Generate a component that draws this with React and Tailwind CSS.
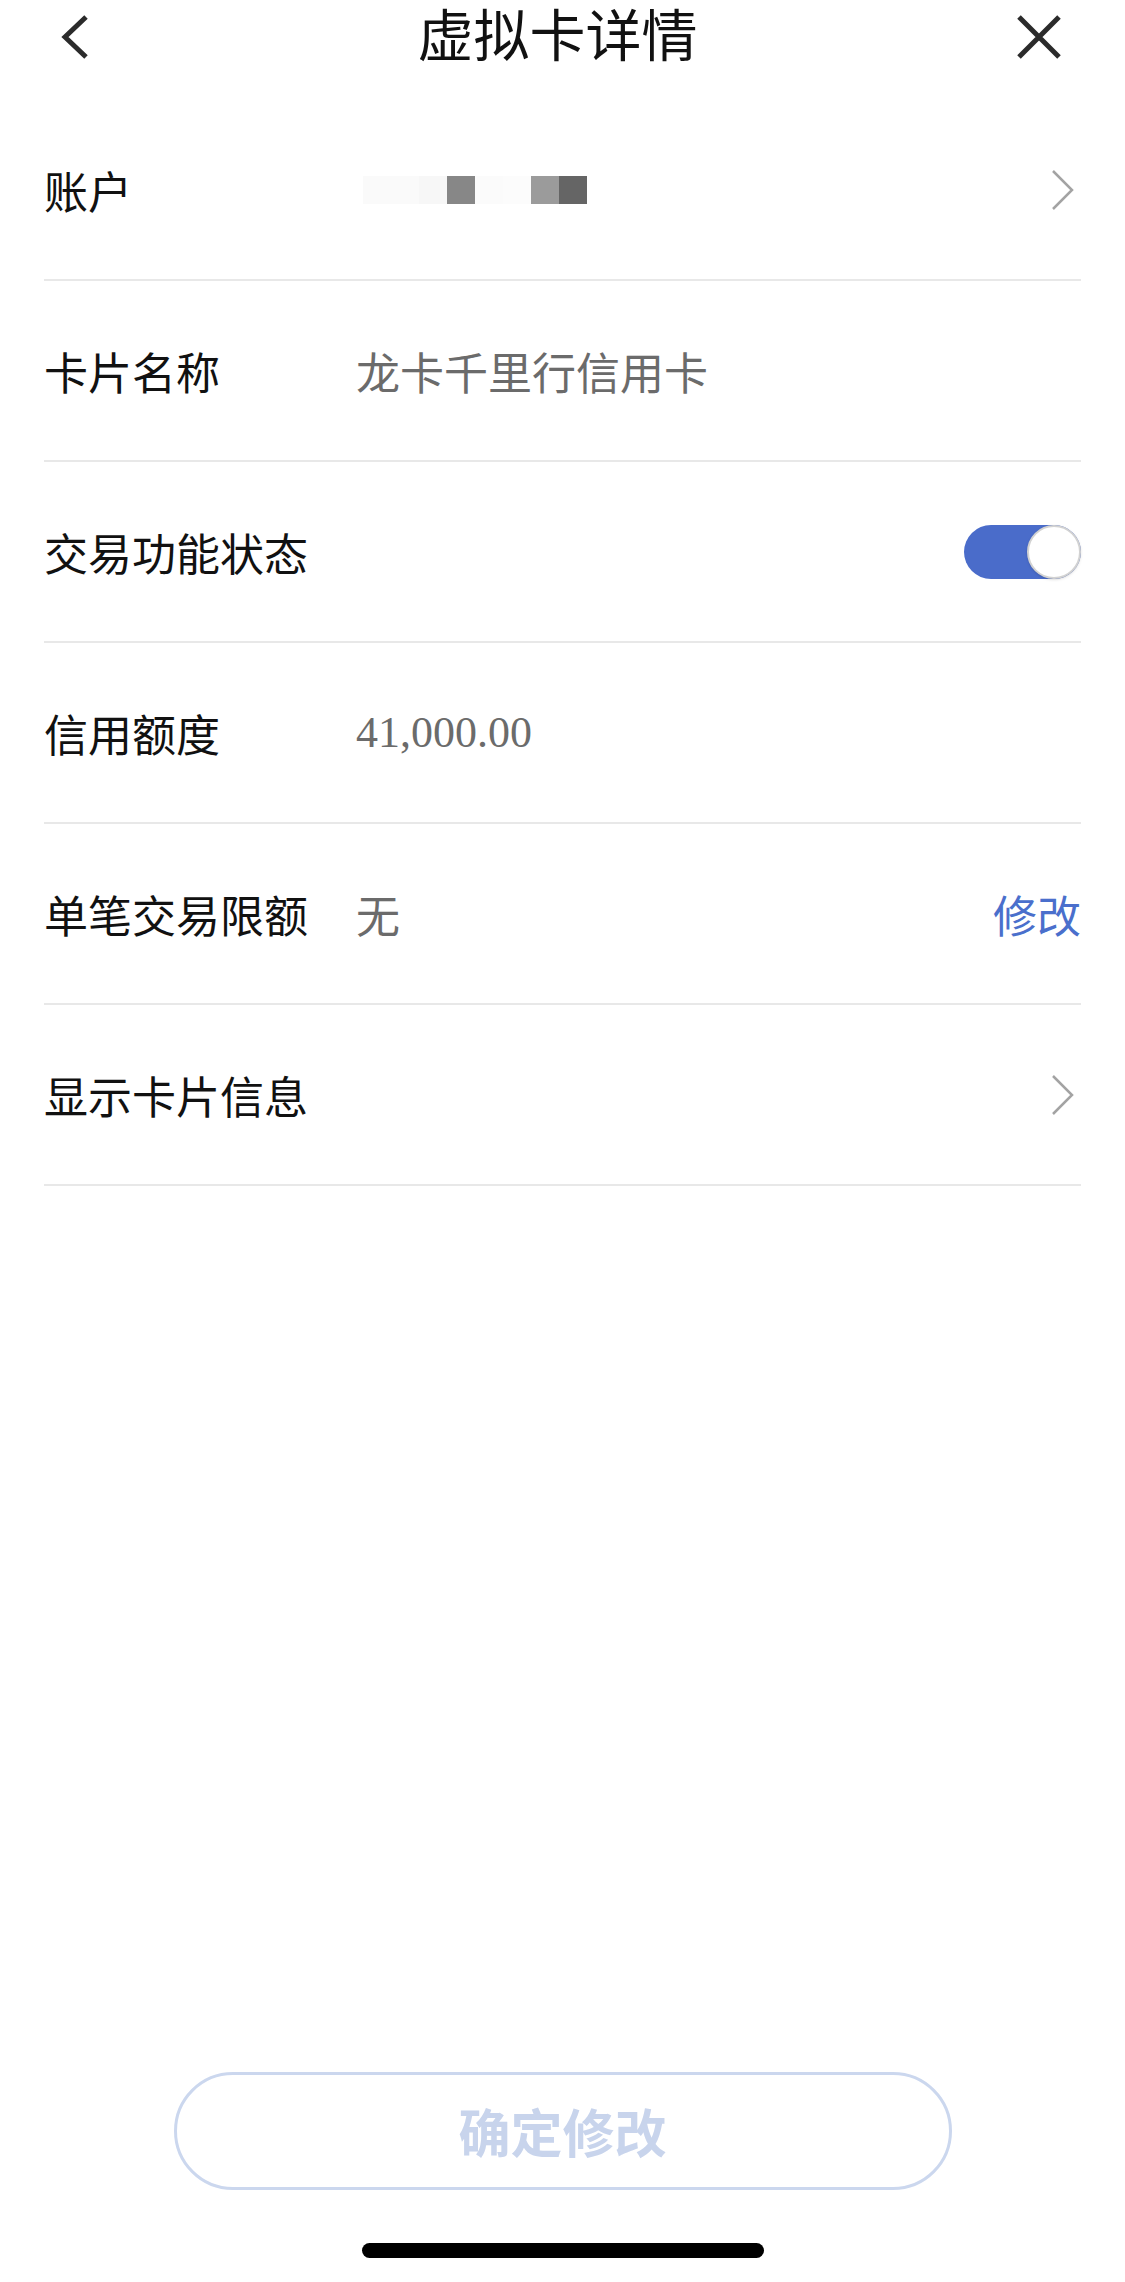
import { useState } from 'react'

const FONT = { fontFamily: '"Noto Sans CJK SC", "Noto Sans", sans-serif' }

// 马赛克遮挡的账户号
const MOSAIC = ['#fafafa', '#fafafa', '#f7f7f7', '#878787', '#fbfbfb', '#fcfcfc', '#9b9b9b', '#656565']

function Chevron() {
  return (
    <svg width="26" height="44" viewBox="0 0 26 44" className="mr-[6px]">
      <path d="M4 3 L23 22 L4 41" fill="none" stroke="#a3a3a3" strokeWidth="2.5" />
    </svg>
  )
}

function Row({ label, children, right }) {
  return (
    <div className="flex items-center h-[181px] border-b-2 border-[#e8e8e8]">
      <span className="w-[312px] shrink-0 text-[44px] leading-normal text-[#111]">{label}</span>
      <div className="flex-1 flex items-center text-[44px] leading-normal text-[#6b6b6b]">{children}</div>
      {right}
    </div>
  )
}

export default function App() {
  const [on, setOn] = useState(true)

  return (
    <div className="w-[1125px] h-[2282px] bg-white flex flex-col" style={FONT}>
      {/* Header */}
      <div className="h-[100px] shrink-0">
        <div className="h-[70px] grid grid-cols-[1fr_auto_1fr] items-center pl-[52px] pr-[62px]">
          <svg width="48" height="48" viewBox="0 0 48 48" className="justify-self-start">
            <path d="M34 4 L13 24 L34 44" fill="none" stroke="#2b2b2b" strokeWidth="5" />
          </svg>
          <h1 className="text-[56px] leading-[64px] pb-[10px] font-normal text-[#111]">虚拟卡详情</h1>
          <svg width="48" height="48" viewBox="0 0 48 48" className="justify-self-end">
            <path d="M4 4 L44 44 M44 4 L4 44" fill="none" stroke="#2b2b2b" strokeWidth="5" />
          </svg>
        </div>
      </div>

      {/* List */}
      <div className="mx-[44px] flex flex-col">
        <Row label="账户" right={<Chevron />}>
          <div className="ml-[7px] flex">
            {MOSAIC.map((c, i) => (
              <div key={i} className="w-[28px] h-[28px]" style={{ backgroundColor: c }} />
            ))}
          </div>
        </Row>
        <Row label="卡片名称">龙卡千里行信用卡</Row>
        <Row
          label="交易功能状态"
          right={
            <button
              onClick={() => setOn(!on)}
              className="w-[117px] h-[54px] rounded-full bg-[#4a6cca] flex items-center justify-end"
            >
              <span className="w-[54px] h-[54px] rounded-full bg-white border-2 border-[#d2d2d2] shadow-sm" />
            </button>
          }
        />
        <Row label="信用额度">
          <span style={{ fontFamily: '"Liberation Serif", serif' }}>41,000.00</span>
        </Row>
        <Row label="单笔交易限额" right={<span className="text-[44px] leading-normal text-[#4a6fcc]">修改</span>}>
          无
        </Row>
        <Row label="显示卡片信息" right={<Chevron />} />
      </div>

      <div className="flex-1" />

      {/* Footer */}
      <div className="flex flex-col items-center pb-[24px]">
        <button className="w-[778px] h-[118px] rounded-full border-[3px] border-[#cbd7ee] text-[52px] font-bold text-[#c8d4ec]">
          确定修改
        </button>
        <div className="mt-[53px] w-[402px] h-[15px] rounded-full bg-black" />
      </div>
    </div>
  )
}
